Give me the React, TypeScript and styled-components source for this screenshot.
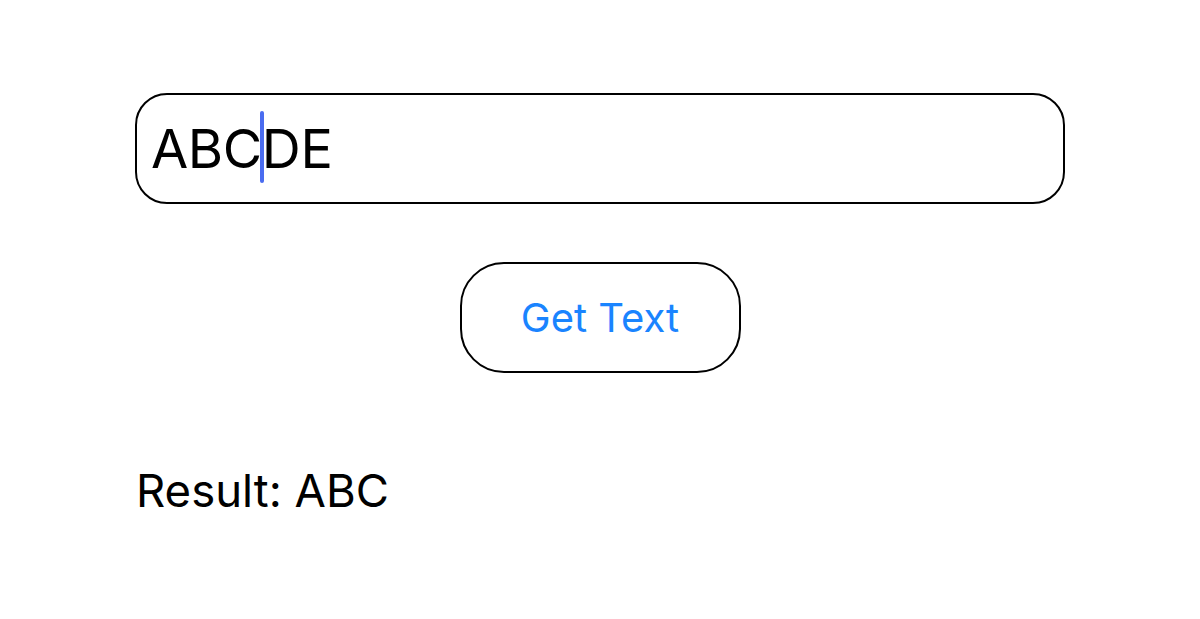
import styled, { createGlobalStyle } from "styled-components";

const GlobalStyle = createGlobalStyle`
  body {
    margin: 0;
    background: #ffffff;
    font-family: Inter, "Noto Sans", sans-serif;
  }
`;

const Page = styled.div`
  width: 930px;
  margin: 0 auto;
  padding-top: 93px;
  display: flex;
  flex-direction: column;
`;

const Field = styled.div`
  height: 111px;
  box-sizing: border-box;
  border: 2.5px solid #000;
  border-radius: 32px;
  padding: 0 14px;
  display: flex;
  align-items: center;
  font-size: 54px;
  color: #000;
  letter-spacing: -0.4px;
`;

const Caret = styled.span`
  display: inline-block;
  width: 4px;
  height: 72px;
  margin: 0 -2px;
  border-radius: 2px;
  background: #4a6cf0;
  vertical-align: middle;
  position: relative;
  top: -2px;
`;

const Button = styled.button`
  align-self: center;
  margin-top: 58px;
  width: 281px;
  height: 111px;
  box-sizing: border-box;
  border: 2.5px solid #000;
  border-radius: 44px;
  background: #fff;
  color: #1a84ff;
  font-family: inherit;
  font-size: 40px;
  cursor: pointer;
`;

const Result = styled.p`
  margin: 90px 0 0 1px;
  font-size: 45.5px;
  color: #000;
`;

export default function App() {
  return (
    <>
      <GlobalStyle />
      <Page>
        <Field>
          ABC
          <Caret />
          DE
        </Field>
        <Button>Get Text</Button>
        <Result>Result: ABC</Result>
      </Page>
    </>
  );
}
